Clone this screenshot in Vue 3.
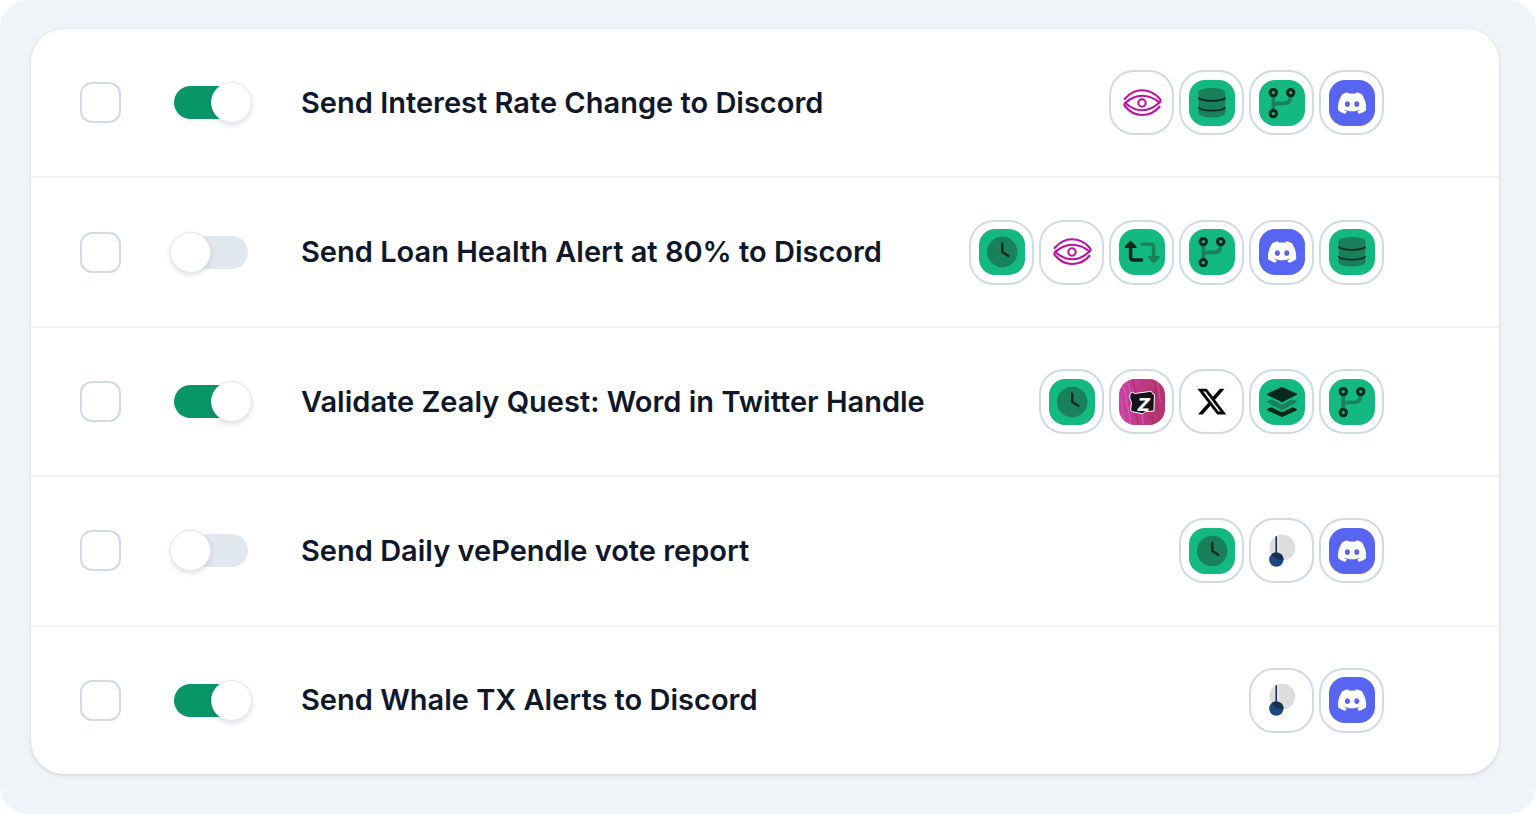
<script setup>
import { ref } from "vue";

const workflows = ref([
    { id: 1, title: "Send Interest Rate Change to Discord", selected: false, enabled: true, steps: ["eye", "database", "branch", "discord"] },
    { id: 2, title: "Send Loan Health Alert at 80% to Discord", selected: false, enabled: false, steps: ["clock", "eye", "loop", "branch", "discord", "database"] },
    { id: 3, title: "Validate Zealy Quest: Word in Twitter Handle", selected: false, enabled: true, steps: ["clock", "zealy", "x", "layers", "branch"] },
    { id: 4, title: "Send Daily vePendle vote report", selected: false, enabled: false, steps: ["clock", "pendle", "discord"] },
    { id: 5, title: "Send Whale TX Alerts to Discord", selected: false, enabled: true, steps: ["pendle", "discord"] },
]);
</script>

<template>
    <main class="page">
        <ul class="card">
            <li v-for="flow in workflows" :key="flow.id" class="row">
                <input :id="'select-' + flow.id" v-model="flow.selected" type="checkbox" class="check" :aria-label="'Select ' + flow.title">
                <input :id="'enable-' + flow.id" v-model="flow.enabled" type="checkbox" role="switch" class="switch">
                <label :for="'enable-' + flow.id" class="title">{{ flow.title }}</label>
                <div class="steps">
                    <span v-for="(step, i) in flow.steps" :key="i" class="step">
                        <svg class="icon" :class="step" viewBox="0 0 46 46" aria-hidden="true">
                            <g v-if="step === 'eye'" fill="none" stroke="#bf10a5" stroke-width="2.100" stroke-linecap="round" stroke-linejoin="round">
                                <path d="M5.600 19C10.500 13.300 16.500 10.200 23 10.200c6 0 12.500 2.600 17.500 8.300 1.500 1.700 1.300 3-.3 4.300C35 27.600 29.500 30.300 23.500 30.300c-6 0-11.500-2.400-16.500-6.800" />
                                <path d="M40.200 22.300C35 18 29 15.700 23.200 15.700c-6.200 0-11.700 2.600-16.700 6.900-1.500 1.300-1.600 2.400-.3 3.900C11 32.300 17 35 23 35c6.700 0 13-3 17.600-8.300" />
                                <circle cx="23" cy="23" r="3.700" />
                            </g>
                            <g v-else-if="step === 'database'">
                                <path class="mid" d="M9.500 12.300C9.500 9.800 15.500 8 22.900 8s13.400 1.800 13.400 4.300v21c0 2.500-6 4.300-13.400 4.300S9.500 35.800 9.500 33.300z" />
                                <path class="dark-line" stroke-width="1.800" d="M9.500 17.500c1 2 6.500 3.300 13.400 3.300s12.400-1.300 13.400-3.300M9.500 27.300c1 2 6.500 3.300 13.400 3.300s12.400-1.300 13.400-3.300" />
                            </g>
                            <g v-else-if="step === 'branch'">
                                <path class="mid-line" stroke-width="3.700" d="M14.300 16v14M31.700 16c0 5-2.200 7.400-7 7.400h-4c-3.200 0-5.200.6-6.400 2" />
                                <g fill="#14b981" stroke="#08281d" stroke-width="3">
                                    <circle cx="14.300" cy="12.600" r="3.200" />
                                    <circle cx="31.700" cy="12.600" r="3.200" />
                                    <circle cx="14.300" cy="33.600" r="3.200" />
                                </g>
                            </g>
                            <g v-else-if="step === 'clock'">
                                <circle class="mid" cx="23.200" cy="23" r="15.200" />
                                <path class="dark-line" stroke-width="2.400" stroke-linecap="round" stroke-linejoin="round" d="M23.200 14.600V23l6 3.700" />
                            </g>
                            <g v-else-if="step === 'loop'" stroke-linecap="round" stroke-linejoin="round">
                                <path class="dark-line" stroke-width="3.500" d="M11.600 17v11.300c0 1.800.8 2.600 2.600 2.600h8.500" />
                                <path class="dark" stroke="#08281d" stroke-width="2" d="M11.600 12.800 6.600 17.900h10z" />
                                <path class="mid-line" stroke-width="3.500" d="M23.300 15.200h8.600c1.800 0 2.700.8 2.700 2.600V29" />
                                <path class="mid" stroke="#18805b" stroke-width="2" d="M34.600 33.200l-5-5.100h10z" />
                            </g>
                            <g v-else-if="step === 'layers'" stroke-width="1.800" stroke-linejoin="round">
                                <path class="dark" stroke="#08281d" d="M23 8.900l14.100 6.300L23 22.300 8.900 15.200z" />
                                <path class="mid" stroke="#18805b" d="M8.900 22.800l3.800-1.400L23 26.500l10.300-5.100 3.800 1.400L23 30.100z" />
                                <path class="dark" stroke="#08281d" d="M8.900 30.600l3.800-1.400L23 34.200l10.300-5 3.800 1.400L23 37.300z" />
                            </g>
                            <g v-else-if="step === 'discord'" fill="#fff" transform="translate(9 9) scale(1.175)">
                                <path d="M20.317 4.3698a19.7913 19.7913 0 00-4.8851-1.5152.0741.0741 0 00-.0785.0371c-.211.3753-.4447.8648-.6083 1.2495-1.8447-.2762-3.68-.2762-5.4868 0-.1636-.3933-.4058-.8742-.6177-1.2495a.077.077 0 00-.0785-.037 19.7363 19.7363 0 00-4.8852 1.515.0699.0699 0 00-.0321.0277C.5334 9.0458-.319 13.5799.0992 18.0578a.0824.0824 0 00.0312.0561c2.0528 1.5076 4.0413 2.4228 5.9929 3.0294a.0777.0777 0 00.0842-.0276c.4616-.6304.8731-1.2952 1.226-1.9942a.076.076 0 00-.0416-.1057c-.6528-.2476-1.2743-.5495-1.8722-.8923a.077.077 0 01-.0076-.1277c.1258-.0943.2517-.1923.3718-.2914a.0743.0743 0 01.0776-.0105c3.9278 1.7933 8.18 1.7933 12.0614 0a.0739.0739 0 01.0785.0095c.1202.099.246.1981.3728.2924a.077.077 0 01-.0066.1276 12.2986 12.2986 0 01-1.873.8914.0766.0766 0 00-.0407.1067c.3604.698.7719 1.3628 1.225 1.9932a.076.076 0 00.0842.0286c1.961-.6067 3.9495-1.5219 6.0023-3.0294a.077.077 0 00.0313-.0552c.5004-5.177-.8382-9.6739-3.5485-13.6604a.061.061 0 00-.0312-.0286zM8.02 15.3312c-1.1825 0-2.1569-1.0857-2.1569-2.419 0-1.3332.9555-2.4189 2.157-2.4189 1.2108 0 2.1757 1.0952 2.1568 2.419 0 1.3332-.9555 2.4189-2.1569 2.4189zm7.9748 0c-1.1825 0-2.1569-1.0857-2.1569-2.419 0-1.3332.9554-2.4189 2.1569-2.4189 1.2108 0 2.1757 1.0952 2.1568 2.419 0 1.3332-.946 2.4189-2.1568 2.4189Z" />
                            </g>
                            <g v-else-if="step === 'x'" transform="translate(7.200 7) scale(1.300)">
                                <path stroke="#000" stroke-width=".3" d="M18.244 2.250h3.308l-7.227 8.260 8.502 11.240H16.170l-5.214-6.817L4.990 21.750H1.680l7.730-8.835L1.254 2.250H8.080l4.713 6.231zm-1.161 17.520h1.833L7.084 4.126H5.117z" />
                            </g>
                            <g v-else-if="step === 'zealy'">
                                <g fill="none" stroke-width="1.500" opacity=".6">
                                    <path stroke="#e263c6" d="M3 6c6 8 3 16 6 24s1 12 3 16M8 4c5 5 2 12 5 18M22 34c2 4 1 8 3 12" />
                                    <path stroke="#a12a68" d="M13 0c4 6 1 10 4 14M36 8c3 8 0 18 4 30M16 34c3 4 2 8 4 12M31 34c3 4 2 8 4 12" />
                                    <path stroke="#d659a4" d="M1 20c4 6 1 14 5 22M38 2c3 8 1 14 4 22" />
                                </g>
                                <path fill="#161419" stroke="#fff" stroke-width="1" stroke-linejoin="round" d="M11 14.600l2.500-1.300 2.300 1.200 16.400-2.200 1.500 2.500 1.800.7-.6 16.500-8.500.6-2.700 2.200-9.900-2-2.300-1.600 1-7.500-1.700-4.500z" />
                                <text x="25" y="32" class="zealy-letter">Z</text>
                            </g>
                            <g v-else-if="step === 'pendle'">
                                <circle cx="23.300" cy="19.600" r="13" fill="#dcddde" />
                                <path d="M18.800 8v17" stroke="#fff" stroke-width="1.300" />
                                <circle cx="17.300" cy="31.600" r="7.200" fill="#1f4782" />
                                <path d="M12.600 26.200a7.200 7.200 0 0 1 11.700 3.500c.2.800.2 1.600.1 2.400A13 13 0 0 1 12.600 26.200z" fill="#1b2f50" />
                                <path d="M17.300 8.300V28" stroke="#1b2f50" stroke-width="1.700" />
                            </g>
                        </svg>
                    </span>
                </div>
            </li>
        </ul>
    </main>
</template>

<style>
body {
    margin: 0;
    background: #fff;
}
</style>

<style scoped>
.page {
    box-sizing: border-box;
    min-height: 100vh;
    display: flex;
    padding: 29px 37px 40px 31px;
    background: #f0f4f8;
    border-radius: 28px;
    font-family: Inter, "Liberation Sans", sans-serif;
}

.card {
    flex: 1;
    display: flex;
    flex-direction: column;
    margin: 0;
    padding: 0;
    list-style: none;
    background: #fff;
    border-radius: 33px;
    box-shadow: 0 2px 4px rgba(15, 23, 42, 0.1), 0 0 3px rgba(15, 23, 42, 0.05);
}

.row {
    flex: 1 1 auto;
    display: flex;
    align-items: center;
    padding: 41px 115px 41px 49px;
}

.row + .row {
    border-top: 2px solid #f1f5f9;
}

.check,
.switch {
    appearance: none;
    box-sizing: border-box;
    flex: none;
    margin: 0;
    cursor: pointer;
}

.check {
    width: 41px;
    height: 41px;
    border: 2px solid #d0dae6;
    border-radius: 12px;
    background: #fff;
}

.check:checked {
    background: #089669;
    border-color: #089669;
}

.switch {
    display: flex;
    align-items: center;
    width: 74px;
    height: 33px;
    margin: 0 53px;
    border-radius: 17px;
    background: #e1e8f0;
}

.switch::before {
    content: "";
    box-sizing: border-box;
    flex: none;
    width: 41px;
    height: 41px;
    margin-left: -4px;
    border: 1px solid #e2e8f0;
    border-radius: 50%;
    background: #fff;
    box-shadow: 0 2px 5px rgba(15, 23, 42, 0.14);
}

.switch:checked {
    justify-content: flex-end;
    background: #089669;
}

.switch:checked::before {
    margin-right: -4px;
}

.title {
    flex: 1;
    color: #0f172a;
    font-size: 29px;
    font-weight: 600;
    line-height: 40px;
    cursor: pointer;
}

.steps {
    display: flex;
    gap: 5px;
}

.step {
    box-sizing: border-box;
    display: flex;
    align-items: center;
    justify-content: center;
    width: 65px;
    height: 65px;
    border: 2px solid #d0dae6;
    border-radius: 25px;
}

.icon {
    width: 46px;
    height: 46px;
    border-radius: 16px;
    background: #14b981;
}

.icon.eye,
.icon.x,
.icon.pendle {
    background: #fff;
}

.icon.discord {
    background: #5865f2;
}

.icon.zealy {
    background: linear-gradient(90deg, #c843a6, #c03a82 50%, #b5336a);
}

.zealy-letter {
    fill: #fff;
    font-family: "DejaVu Sans", sans-serif;
    font-size: 17px;
    font-style: italic;
    font-weight: 700;
    text-anchor: middle;
}

.mid {
    fill: #18805b;
}

.mid-line {
    fill: none;
    stroke: #18805b;
}

.dark {
    fill: #08281d;
}

.dark-line {
    fill: none;
    stroke: #08281d;
}
</style>
